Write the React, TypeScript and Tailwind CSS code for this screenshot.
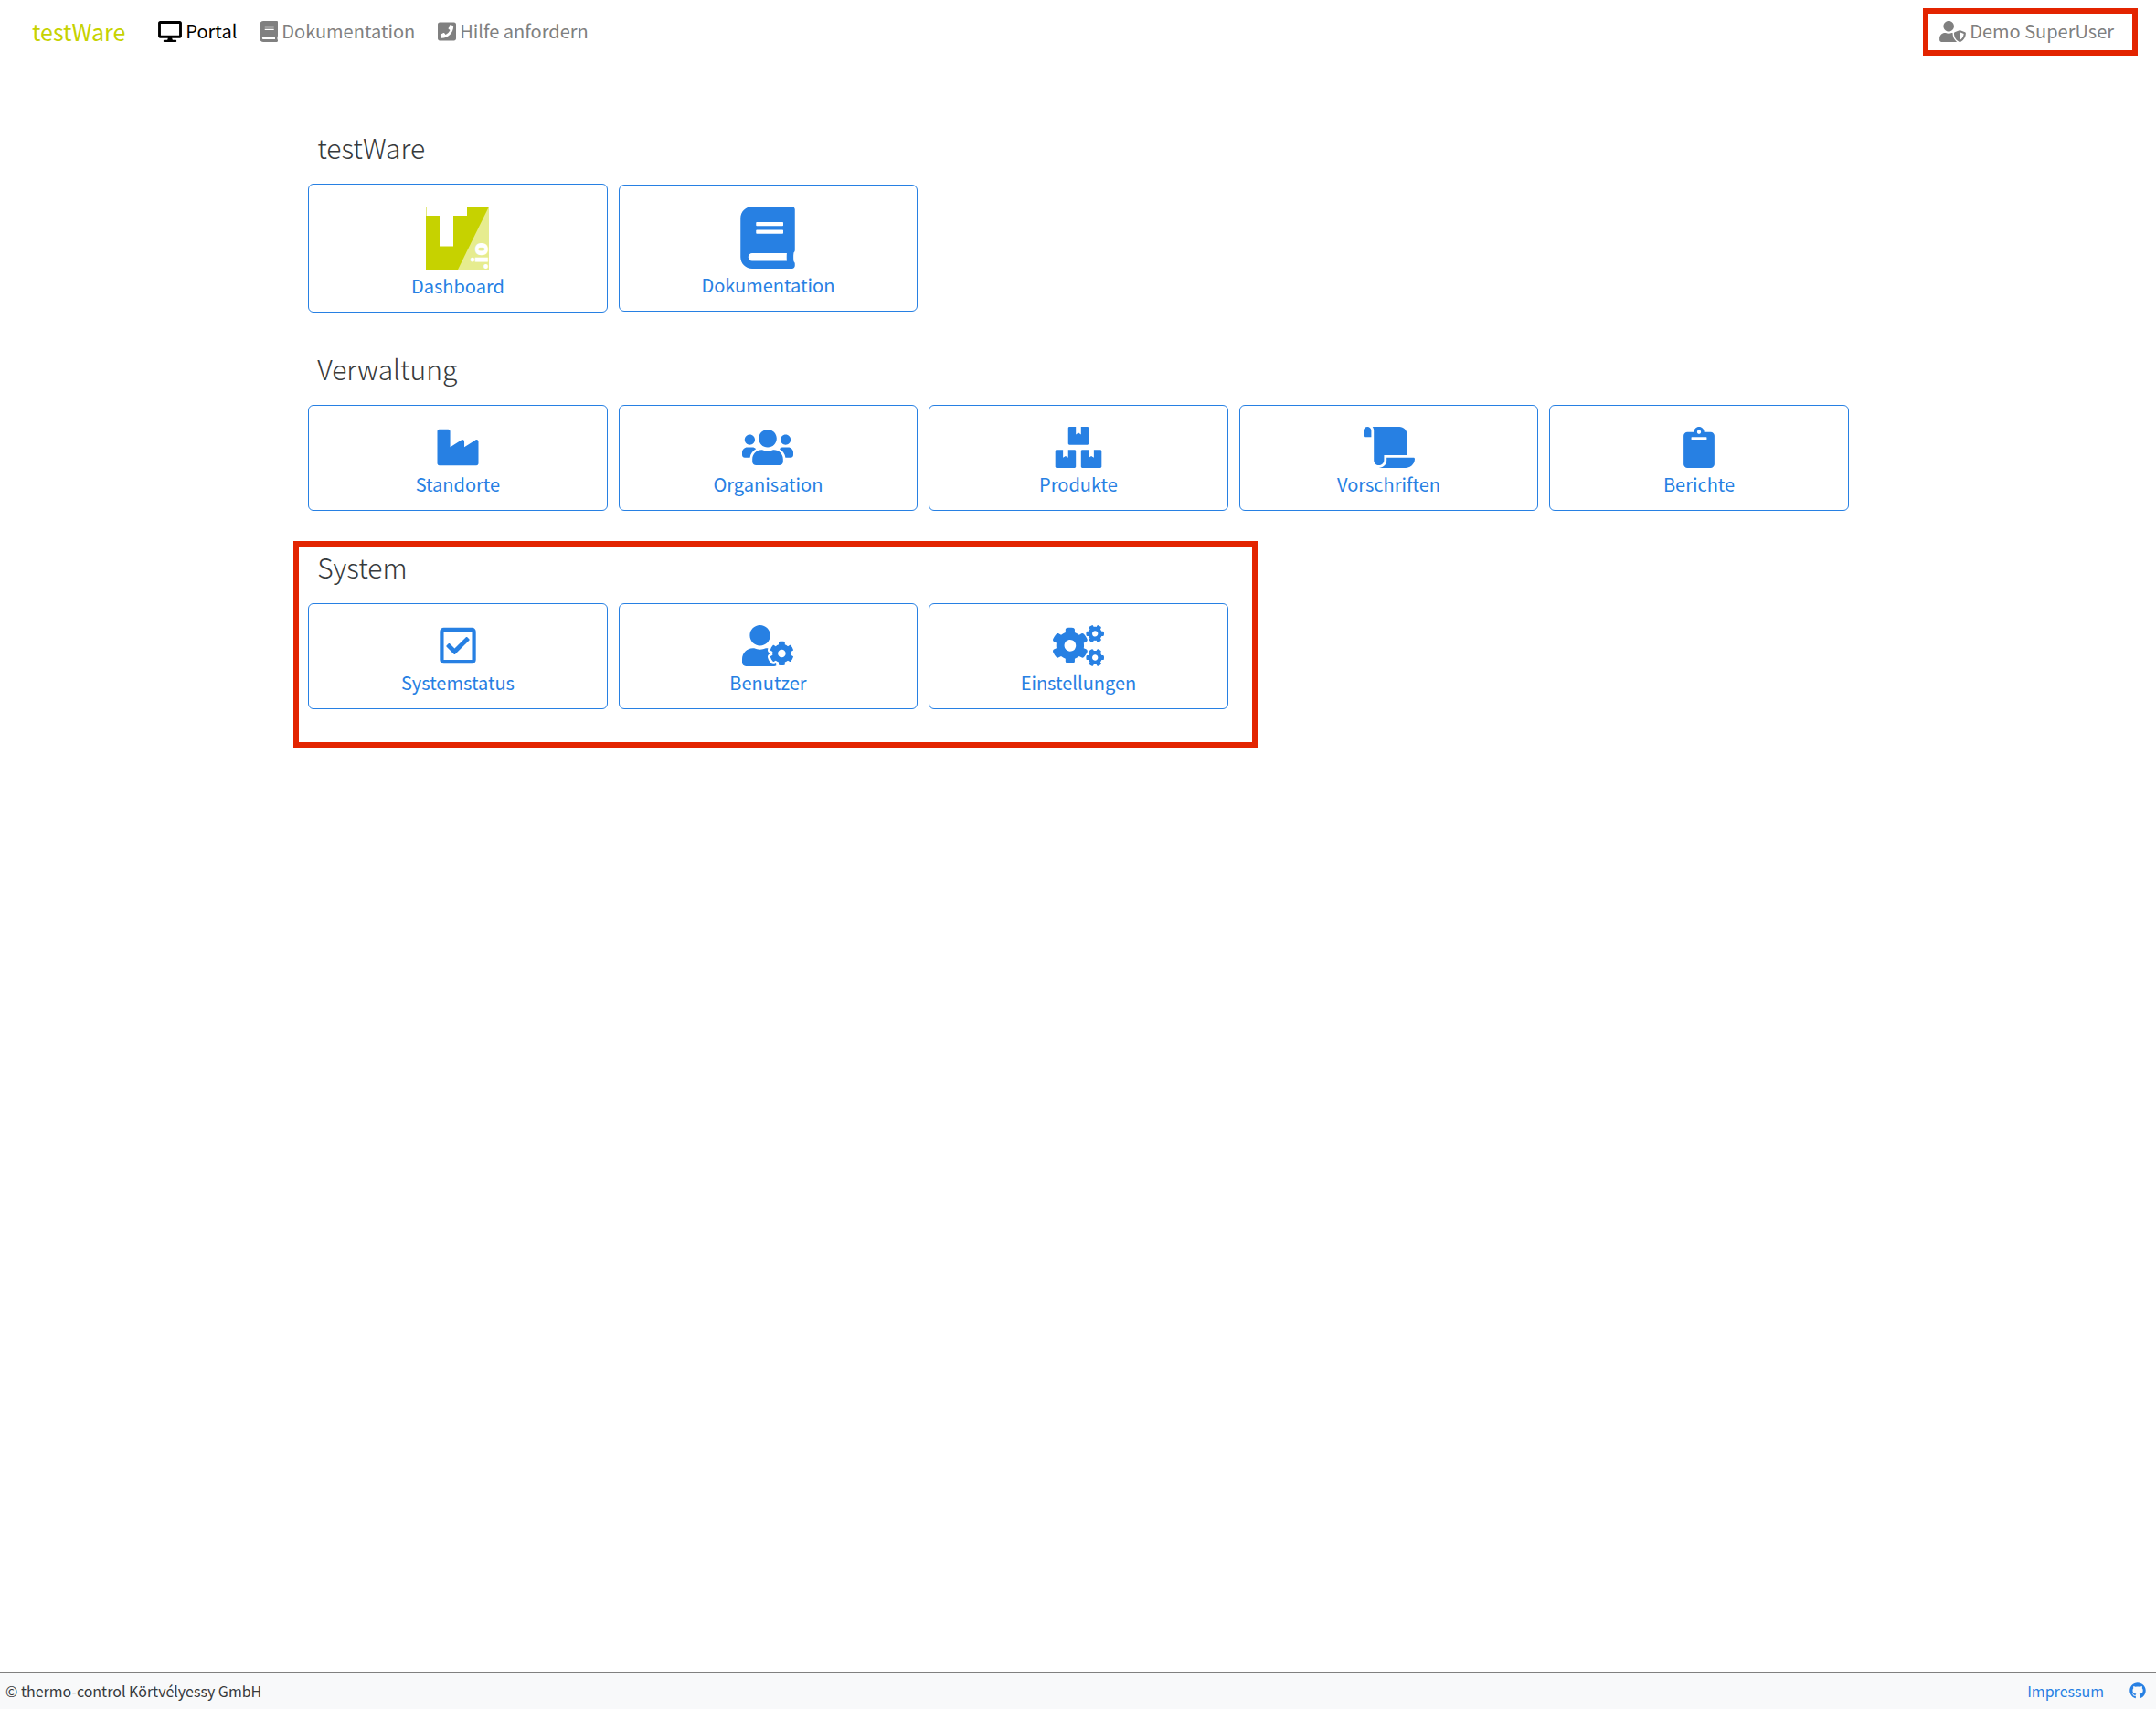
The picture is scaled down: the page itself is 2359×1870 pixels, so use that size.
import type { ReactNode } from "react";
import {
  FaBook,
  FaBoxes,
  FaClipboard,
  FaCogs,
  FaDesktop,
  FaGithub,
  FaIndustry,
  FaPhoneSquare,
  FaRegCheckSquare,
  FaScroll,
  FaUserCog,
  FaUserShield,
  FaUsers,
} from "react-icons/fa";

function Logo() {
  return (
    <svg viewBox="0 0 69 69" className="mt-px size-[69px] overflow-visible" aria-hidden="true">
      <rect width="69" height="69" fill="#c6d200" />
      <path d="M69 0V69H35Z" fill="#e6ec8f" />
      <path d="M0.5 0H45V10H30V43.5H15V10H0.5Z" fill="#fff" />
      <text
        transform="translate(67.5 69) rotate(-90)"
        fill="#fff"
        fontFamily="Open Sans, sans-serif"
        fontWeight="800"
        fontSize="24"
      >
        .io
      </text>
    </svg>
  );
}

function Card({ icon, label }: { icon: ReactNode; label: string }) {
  return (
    <a
      href="#"
      className="flex flex-col items-center gap-1.5 rounded-md border border-[#2780e3] pt-[23px] pb-4 text-xl leading-6 text-[#2780e3]"
    >
      {icon}
      {label}
    </a>
  );
}

function Section({
  title,
  highlighted,
  children,
}: {
  title: string;
  highlighted?: boolean;
  children: ReactNode;
}) {
  return (
    <section className="relative">
      {highlighted && (
        <div className="pointer-events-none absolute -top-1 -bottom-[42px] -left-4 w-[62.6%] border-6 border-[#e32400]" />
      )}
      <h2 className="mb-4 pl-2.5 text-[30px] leading-12 font-light text-[#373a3c]">{title}</h2>
      <div className="grid grid-cols-5 items-center gap-3">{children}</div>
    </section>
  );
}

const tileIcon = "h-[45px] w-14";

export default function App() {
  return (
    <div className="flex min-h-screen flex-col bg-white font-['Noto_Sans_CJK_SC','Noto_Sans',sans-serif]">
      <header className="flex h-[70px] items-start pt-[9px] pr-5 pl-[35px] text-xl text-[#808080]">
        <a href="#" className="mr-9 flex h-[50px] items-center text-[25px] text-[#c6d200]">
          testWare
        </a>
        <nav className="flex h-[50px] items-center gap-[25px]">
          <a href="#" className="flex items-center gap-1 text-black">
            <FaDesktop className="h-[23px] w-[26px]" />
            Portal
          </a>
          <a href="#" className="flex items-center gap-1">
            <FaBook className="h-[23px] w-5" />
            Dokumentation
          </a>
          <a href="#" className="flex items-center gap-1">
            <FaPhoneSquare className="h-[23px] w-5" />
            Hilfe anfordern
          </a>
        </nav>
        <button
          type="button"
          className="ml-auto flex h-[52px] items-center gap-1 border-6 border-[#e32400] pr-5 pb-0.5 pl-3"
        >
          <FaUserShield className="h-[23px] w-[29px]" />
          Demo SuperUser
        </button>
      </header>

      <main className="mx-auto flex w-[71.5%] flex-1 flex-col gap-[37px] pt-[67px] pl-px">
        <Section title="testWare">
          <Card icon={<Logo />} label="Dashboard" />
          <Card icon={<FaBook className="h-[68px] w-[60px]" />} label="Dokumentation" />
        </Section>
        <Section title="Verwaltung">
          <Card icon={<FaIndustry className={tileIcon} />} label="Standorte" />
          <Card icon={<FaUsers className={tileIcon} />} label="Organisation" />
          <Card icon={<FaBoxes className={tileIcon} />} label="Produkte" />
          <Card icon={<FaScroll className={tileIcon} />} label="Vorschriften" />
          <Card icon={<FaClipboard className={tileIcon} />} label="Berichte" />
        </Section>
        <Section title="System" highlighted>
          <Card icon={<FaRegCheckSquare className={tileIcon} />} label="Systemstatus" />
          <Card icon={<FaUserCog className={tileIcon} />} label="Benutzer" />
          <Card icon={<FaCogs className={tileIcon} />} label="Einstellungen" />
        </Section>
      </main>

      <footer className="flex h-10 items-center border-t border-[#808080] bg-[#f8f9fa] pr-[11px] pb-0.5 pl-1.5 text-base text-[#373a3c]">
        <span>© thermo-control Körtvélyessy GmbH</span>
        <a href="#" className="mr-7 ml-auto text-[#2780e3]">
          Impressum
        </a>
        <a href="#" aria-label="GitHub" className="text-[#2780e3]">
          <FaGithub className="size-[18px]" />
        </a>
      </footer>
    </div>
  );
}
